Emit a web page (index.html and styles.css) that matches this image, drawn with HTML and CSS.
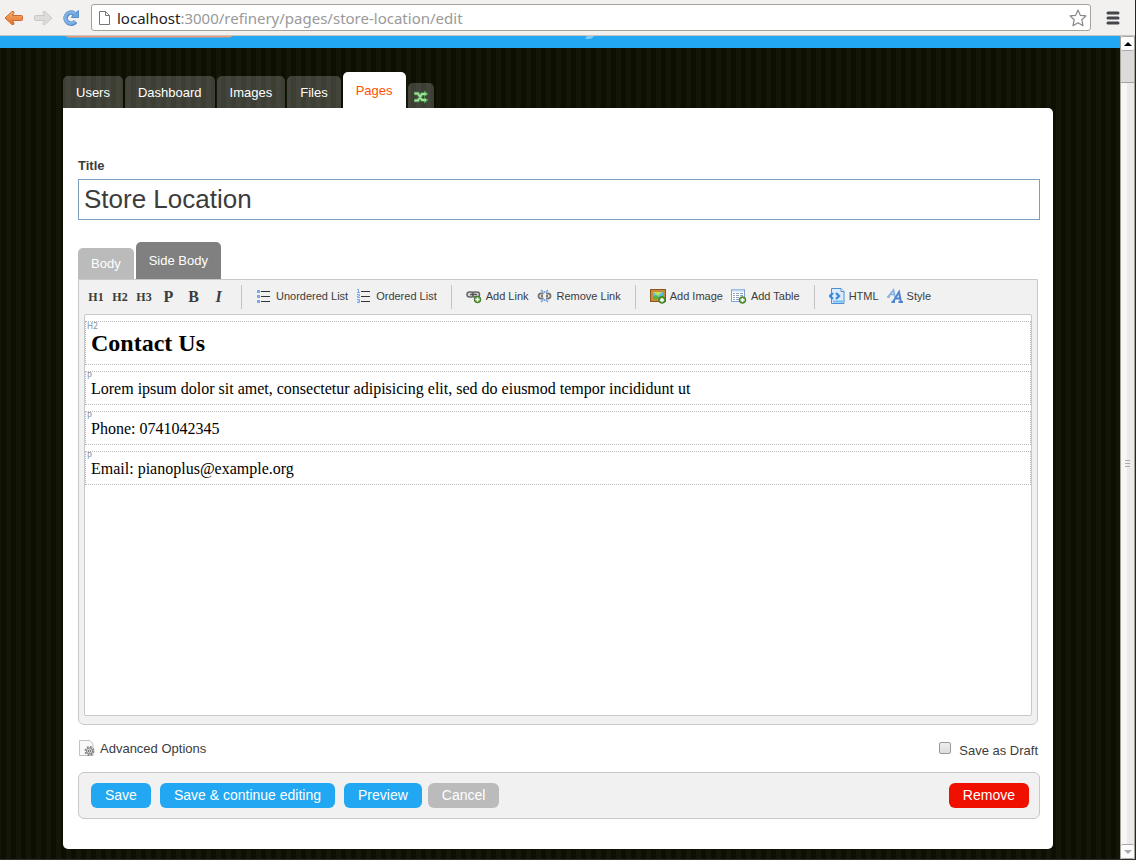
FILE: index.html
```html
<!DOCTYPE html>
<html lang="en">
<head>
<meta charset="utf-8">
<title>Store Location - Edit page</title>
<link rel="stylesheet" href="styles.css">
</head>
<body>
<div class="browser">
  <header class="chrome">
    <button class="chrome-btn" type="button" aria-label="Back">
      <svg width="20" height="16" viewBox="0 0 20 16"><defs><linearGradient id="og" x1="0" y1="0" x2="0" y2="1"><stop offset="0" stop-color="#f8b06a"/><stop offset="1" stop-color="#e0702c"/></linearGradient></defs><path d="M1 8 L8 1.5 Q10.5 1 10 3 L8.500 5.500 H17.500 Q18.500 5.500 18.500 6.500 V9.500 Q18.500 10.500 17.500 10.500 H8.500 L10 13 Q10.500 15 8 14.500 Z" fill="url(#og)" stroke="#cf6830" stroke-width="1" stroke-linejoin="round"/></svg>
    </button>
    <button class="chrome-btn" type="button" aria-label="Forward" disabled>
      <svg width="20" height="16" viewBox="0 0 20 16"><path d="M19 8 L12 1.500 Q9.500 1 10 3 L11.500 5.500 H2.500 Q1.500 5.500 1.500 6.500 V9.500 Q1.500 10.500 2.500 10.500 H11.500 L10 13 Q9.500 15 12 14.500 Z" fill="#dddcda" stroke="#cbc9c7" stroke-linejoin="round"/></svg>
    </button>
    <button class="chrome-btn" type="button" aria-label="Reload">
      <svg width="18" height="18" viewBox="0 0 18 18"><path d="M13.500 12.500 A5.500 5.500 0 1 1 12 4.500" fill="none" stroke="#5a8cc8" stroke-width="4.600"/><path d="M9.500 8.500 H16.500 V1.500 L13.800 3.600 L10.800 6 Z" fill="#6fa4dc" stroke="#5a8cc8" stroke-linejoin="round"/><path d="M13 12.200 A5.500 5.500 0 1 1 12.500 4.800" fill="none" stroke="#80b1e4" stroke-width="2.800"/></svg>
    </button>
    <div class="address">
      <svg width="13" height="16" viewBox="0 0 13 16"><path d="M1.500 1.500 H7.500 L11.500 5.500 V14.500 H1.500 Z M7.500 1.500 V5.500 H11.500" fill="#fff" stroke="#777"/></svg>
      <div class="url"><b>localhost</b>:3000/refinery/pages/store-location/edit</div>
      <button class="chrome-btn" type="button" aria-label="Bookmark">
        <svg width="18" height="18" viewBox="0 0 18 18"><path d="M9 1 L11.300 6.300 L17 6.900 L12.800 10.700 L14 16.700 L9 13.700 L4 16.700 L5.200 10.700 L1 6.900 L6.700 6.300 Z" fill="#fff" stroke="#888" stroke-width="1.200" stroke-linejoin="round"/></svg>
      </button>
    </div>
    <button class="chrome-btn menu-btn" type="button" aria-label="Menu">
      <svg width="14" height="14" viewBox="0 0 14 14"><path d="M2 2 H12 M2 7 H12 M2 12 H12" stroke="#45464a" stroke-width="3" stroke-linecap="round"/></svg>
    </button>
  </header>

  <div class="viewport">
    <div class="page">
      <div class="topbar">
        <svg class="notice" width="168" height="2" viewBox="0 0 168 2"><path d="M0 0 H168 L165 1.500 H3 Z" fill="#ee9b76"/></svg>
        <svg class="fleck" width="9" height="4" viewBox="0 0 9 4"><path d="M2 0 H9 Q7 3 5 3 H0 Z" fill="#7cc8f8"/></svg>
      </div>
      <main class="wrapper">
        <nav class="tabs">
          <a href="#">Users</a>
          <a href="#">Dashboard</a>
          <a href="#">Images</a>
          <a href="#">Files</a>
          <a href="#" class="active">Pages</a>
          <a href="#" class="shuffle" aria-label="Reorder tabs">
            <svg width="16" height="14" viewBox="0 0 16 14"><path d="M1 3.500 H5 L9 10 H12 M1 10.500 H5 L9 4 H12" fill="none" stroke="#439148" stroke-width="3.600"/><path d="M11 0.500 L15.500 4 L11 7 Z M11 7 L15.500 10 L11 13.500 Z" fill="#56ad54"/><path d="M1.500 3.500 H5 L9 10 H13 M1.500 10.500 H5 L9 4 H13" fill="none" stroke="#a5dd9d" stroke-width="1.800"/></svg>
          </a>
        </nav>
        <form class="panel">
          <label class="title-label" for="title">Title</label>
          <input class="title-input" id="title" type="text" value="Store Location">

          <div class="part-tabs">
            <a href="#">Body</a>
            <a href="#" class="active">Side Body</a>
          </div>
          <section class="editor">
            <div class="toolbar">
              <div class="group letters">
                <button type="button">H1</button>
                <button type="button">H2</button>
                <button type="button">H3</button>
                <button type="button" class="big">P</button>
                <button type="button" class="big">B</button>
                <button type="button" class="big italic">I</button>
              </div>
              <div class="group">
                <button type="button"><svg width="16" height="16" viewBox="0 0 16 16"><path d="M5 3.500 H14 M5 8.500 H14 M5 13.500 H14" stroke="#333"/><path d="M1 2 H4 V5 H1 Z M1 7 H4 V10 H1 Z M1 12 H4 V15 H1 Z" fill="#79a9ea"/></svg>Unordered List</button>
                <button type="button"><svg width="16" height="16" viewBox="0 0 16 16"><path d="M5 3.500 H14 M5 8.500 H14 M5 13.500 H14" stroke="#333"/><path d="M1 1.500 H2.500 V4.500 M1 4.500 H4 M1 6.500 H3.500 V8 H1.500 V9.500 H4 M1 11.500 H3.500 V14.500 H1 M1.500 13 H3.500" fill="none" stroke="#79a9ea"/></svg>Ordered List</button>
              </div>
              <div class="group">
                <button type="button"><svg width="16" height="16" viewBox="0 0 16 16"><g fill="#ddd" stroke="#666" stroke-width="1.500"><rect x="1" y="4" width="7" height="5" rx="2.500"/><rect x="6.500" y="4" width="7" height="5" rx="2.500"/></g><path d="M4 6.500 H11" stroke="#555" stroke-width="1.500"/><circle cx="11.500" cy="11.500" r="3.300" fill="#6aa84a" stroke="#3d7525"/><path d="M9.500 11.500 H13.500 M11.500 9.500 V13.500" stroke="#fff" stroke-width="1.300"/></svg>Add Link</button>
                <button type="button"><svg width="16" height="16" viewBox="0 0 16 16"><path d="M6.500 5.500 H4 Q1.500 5.500 1.500 8 T4 10.500 H6.500 M9 5.500 H11 Q13.500 5.500 13.500 8 T11 10.500 H9 M4 8 H6 M9 8 H11" fill="none" stroke="#777" stroke-width="1.800"/><path d="M4 2 L6 4 M7.500 3 V5 M11 2 L9 4 M4 14 L6 12 M7.500 13 V11 M11 14 L9 12" stroke="#70a4e6" stroke-width="1.500"/></svg>Remove Link</button>
              </div>
              <div class="group">
                <button type="button"><svg width="16" height="16" viewBox="0 0 16 16"><rect x="0.500" y="1.500" width="15" height="12" fill="#c98b3d" stroke="#8c571c"/><rect x="3" y="4" width="10" height="7" fill="#5cbcf0"/><path d="M3 11 V9 L6 7 L9 9 L13 7 V11 Z" fill="#55b63a"/><path d="M3 4 L8 8 L12 4 Z" fill="#bce64f"/><circle cx="12" cy="12" r="3.300" fill="#6aa84a" stroke="#3d7525"/><path d="M10 12 H14 M12 10 V14" stroke="#fff" stroke-width="1.300"/></svg>Add Image</button>
                <button type="button"><svg width="16" height="16" viewBox="0 0 16 16"><path d="M0.500 1.500 H13.500 V13.500 H0.500 Z" fill="#fff" stroke="#78a3d8"/><path d="M1 2.500 H13" stroke="#bcd5f4" stroke-width="2"/><path d="M2 5.500 H12 M2 7.500 H12 M2 9.500 H12 M2 11.500 H12" stroke="#91a5bd"/><path d="M4.500 4 V13 M8.500 4 V13" stroke="#fff"/><circle cx="11.500" cy="12" r="3.300" fill="#6aa84a" stroke="#3d7525"/><path d="M9.500 12 H13.500 M11.500 10 V14" stroke="#fff" stroke-width="1.300"/></svg>Add Table</button>
              </div>
              <div class="group">
                <button type="button"><svg width="16" height="16" viewBox="0 0 16 16"><path d="M2.500 0.500 H12 L15 3.500 V15.500 H2.500 Z" fill="#dcecfb" stroke="#4b8fd6"/><path d="M12 0.500 V3.500 H15" fill="#fff" stroke="#4b8fd6"/><path d="M4 5 L1 8 L4 11 M7 5 L10 8 L7 11" fill="none" stroke="#3b8bd6" stroke-width="2.400"/><path d="M4 13.500 H14" stroke="#6dbbf1" stroke-width="2"/></svg>HTML</button>
                <button type="button"><svg width="16" height="16" viewBox="0 0 16 16"><path d="M1 9 L6.500 2 L8 9 M3 6.500 H8 M0 9 H3" fill="none" stroke="#86afe2" stroke-width="1.700"/><path d="M6 14 L12 4 L14 14 M8 10.500 H13 M4.500 14 H8 M11.500 14 H16" fill="none" stroke="#4d85cf" stroke-width="2"/></svg>Style</button>
              </div>
            </div>
            <div class="canvas">
              <div class="block"><span class="tag">H2</span><h2>Contact Us</h2></div>
              <div class="block"><span class="tag">P</span><p>Lorem ipsum dolor sit amet, consectetur adipisicing elit, sed do eiusmod tempor incididunt ut</p></div>
              <div class="block"><span class="tag">P</span><p>Phone: 0741042345</p></div>
              <div class="block"><span class="tag">P</span><p>Email: pianoplus@example.org</p></div>
            </div>
          </section>

          <div class="options">
            <a href="#" class="advanced"><svg width="16" height="16" viewBox="0 0 16 16"><path d="M0.500 0.500 H11 L14 4 V15.500 H0.500 Z" fill="#f8f8f8" stroke="#c2c2c2"/><circle cx="10.500" cy="11" r="4" fill="none" stroke="#888" stroke-width="2" stroke-dasharray="1.800 1.340"/><circle cx="10.500" cy="11" r="3" fill="#eee" stroke="#888" stroke-width="1.200"/><circle cx="10.500" cy="11" r="1.200" fill="#fff" stroke="#666"/></svg>Advanced Options</a>
            <label class="draft" for="draft"><input id="draft" type="checkbox">Save as Draft</label>
          </div>

          <div class="actions">
            <button type="submit">Save</button>
            <button type="button">Save &amp; continue editing</button>
            <button type="button">Preview</button>
            <button type="button" class="cancel">Cancel</button>
            <button type="button" class="remove">Remove</button>
          </div>
        </form>
      </main>
    </div>
    <div class="scrollbar">
      <button type="button" aria-label="Scroll up"><svg width="8" height="4" viewBox="0 0 8 4"><path d="M4 0 L8 4 H0 Z" fill="#000"/></svg></button>
      <div class="trough"></div>
      <div class="thumb"><i></i><i></i><i></i></div>
      <button type="button" aria-label="Scroll down"><svg width="8" height="4" viewBox="0 0 8 4"><path d="M0 0 H8 L4 4 Z" fill="#aaa"/></svg></button>
    </div>
  </div>
</div>
</body>
</html>
```
FILE: styles.css
```css
* { box-sizing: border-box; }
body { margin: 0; font-family: "Liberation Sans", Arial, sans-serif; font-size: 13px; color: #3c3c3c; }
button, input { font-family: inherit; margin: 0; }
button { border: 0; padding: 0; background: none; }
a { color: inherit; text-decoration: none; }
svg { display: block; flex: none; }

.browser { display: flex; flex-direction: column; min-height: 100vh; border-right: 1px solid #25252b; border-bottom: 1px solid #302f2b; }

.chrome { display: flex; align-items: center; height: 36px; padding: 0 15px 0 4px; background: #f2f1f0; border-bottom: 1px solid #c9c6c2; }
.chrome-btn { display: flex; margin-right: 9px; }
.address { display: flex; align-items: center; flex: 1; height: 27px; padding-left: 6px; margin-left: 2px; background: #fff; border: 1px solid #a5a29c; border-radius: 3px; }
.address .chrome-btn { margin-right: 3px; }
.url { flex: 1; margin-left: 6px; font-family: "Noto Sans", sans-serif; font-size: 15px; line-height: 20px; color: #999; }
.url b { font-weight: 400; color: #222; }
.menu-btn { margin: 0 0 0 15px; }

.viewport { display: flex; flex: 1; }
.page { flex: 1; background: repeating-linear-gradient(90deg, #15160a 0 1px, #0e0f01 1px 6px, #15160a 6px 10px); }
.topbar { position: relative; height: 12px; background: #22a7f2; }
.notice { position: absolute; left: 65px; top: 0; }
.fleck { position: absolute; left: 585px; top: 0; }

.wrapper { margin: 24px 67px 0 63px; padding-bottom: 10px; }
.tabs { display: flex; align-items: flex-end; gap: 2px; height: 36px; }
.tabs a { height: 32px; padding: 0 13px; line-height: 33px; color: #fff; background: rgba(255, 255, 255, 0.2); border-radius: 5px 5px 0 0; }
.tabs .active { height: 36px; line-height: 37px; color: #ff5000; background: #fff; }
.tabs .shuffle { display: flex; align-items: center; height: 25px; padding: 2px 5px 0; }

.panel { padding: 50px 13px 30px 15px; background: #fff; border-radius: 0 5px 5px 5px; }
.title-label { display: block; line-height: 16px; font-weight: 700; }
.title-input { display: block; width: 100%; height: 41px; margin-top: 5px; padding: 0 5px; border: 1px solid #7c9fbf; border-radius: 0; font-size: 26px; color: #3c3c3c; background: #fff; }

.part-tabs { display: flex; align-items: flex-end; gap: 2px; height: 37px; margin-top: 22px; }
.part-tabs a { height: 31px; padding: 0 13px; line-height: 31px; color: #fff; background: #bbb; border-radius: 5px 5px 0 0; }
.part-tabs .active { height: 37px; line-height: 37px; background: #808080; }

.editor { margin-right: 2px; padding: 0 5px 8px; background: #f1f1f1; border: 1px solid #c8c8c8; border-radius: 0 0 6px 6px; }
.toolbar { display: flex; align-items: center; height: 34px; }
.group { display: flex; align-items: center; gap: 8px; height: 24px; padding: 0 14px; border-left: 1px solid #c4c4c4; }
.group button { display: flex; align-items: center; gap: 4px; padding-bottom: 2px; font-size: 11px; color: #3c3c3c; white-space: nowrap; }
.group.letters { padding-left: 4px; border: 0; }
.letters button { justify-content: center; width: 16px; padding: 0; font-family: "Liberation Serif", serif; font-size: 12px; font-weight: 700; }
.letters .big { width: 17px; font-size: 16px; }
.letters .italic { font-style: italic; }

.canvas { min-height: 402px; padding-top: 6px; background: #fff; border: 1px solid #c8c8c8; border-radius: 2px; font-family: "Liberation Serif", serif; font-size: 16px; color: #000; }
.block { position: relative; margin-bottom: 6px; padding: 8px 5px 6px; border: 1px dotted #bbb; }
.block h2 { margin: 0 0 1px; font-size: 24px; line-height: 27px; }
.block p { margin: 0; line-height: 18px; }
.tag { position: absolute; left: 1px; top: 1px; font-family: "DejaVu Sans", sans-serif; font-size: 8px; line-height: 8px; color: #8795a5; }

.options { display: flex; justify-content: space-between; margin: 14px 2px 0 1px; height: 33px; }
.advanced { display: flex; align-items: center; gap: 5px; height: 18px; }
.draft { display: flex; align-items: center; height: 22px; }
.draft input { appearance: none; width: 12px; height: 12px; margin: 0 8px 4px 0; border: 1px solid #999; border-radius: 2px; background: linear-gradient(#eee, #ddd); }

.actions { display: flex; align-items: center; height: 47px; padding: 0 10px 0 12px; background: #f1f1f1; border: 1px solid #c8c8c8; border-radius: 6px; }
.actions button { height: 25px; margin-right: 9px; padding: 0 14px 2px; border-radius: 6px; font-size: 14px; color: #fff; background: #22a7f2; }
.actions .cancel { margin-left: -3px; background: #bbb; }
.actions .remove { margin: 0 0 0 auto; background: #f01000; }

.scrollbar { display: flex; flex-direction: column; width: 15px; border: 1px solid #a5a29c; border-width: 0 1px; background: #f5f5f4; }
.scrollbar button { display: flex; align-items: center; justify-content: center; height: 15px; background: #fdfdfd; border: 1px solid #aaa; border-width: 1px 0; border-radius: 2px; }
.trough { height: 31px; background: #dcdbda; }
.thumb { display: flex; flex: 1; flex-direction: column; align-items: center; justify-content: center; gap: 2px; border-top: 1px solid #a5a29c; background: linear-gradient(90deg, #f8f7f6 50%, #ebeae9 50%); }
.thumb i { width: 5px; height: 1px; background: #aaa; }
```
